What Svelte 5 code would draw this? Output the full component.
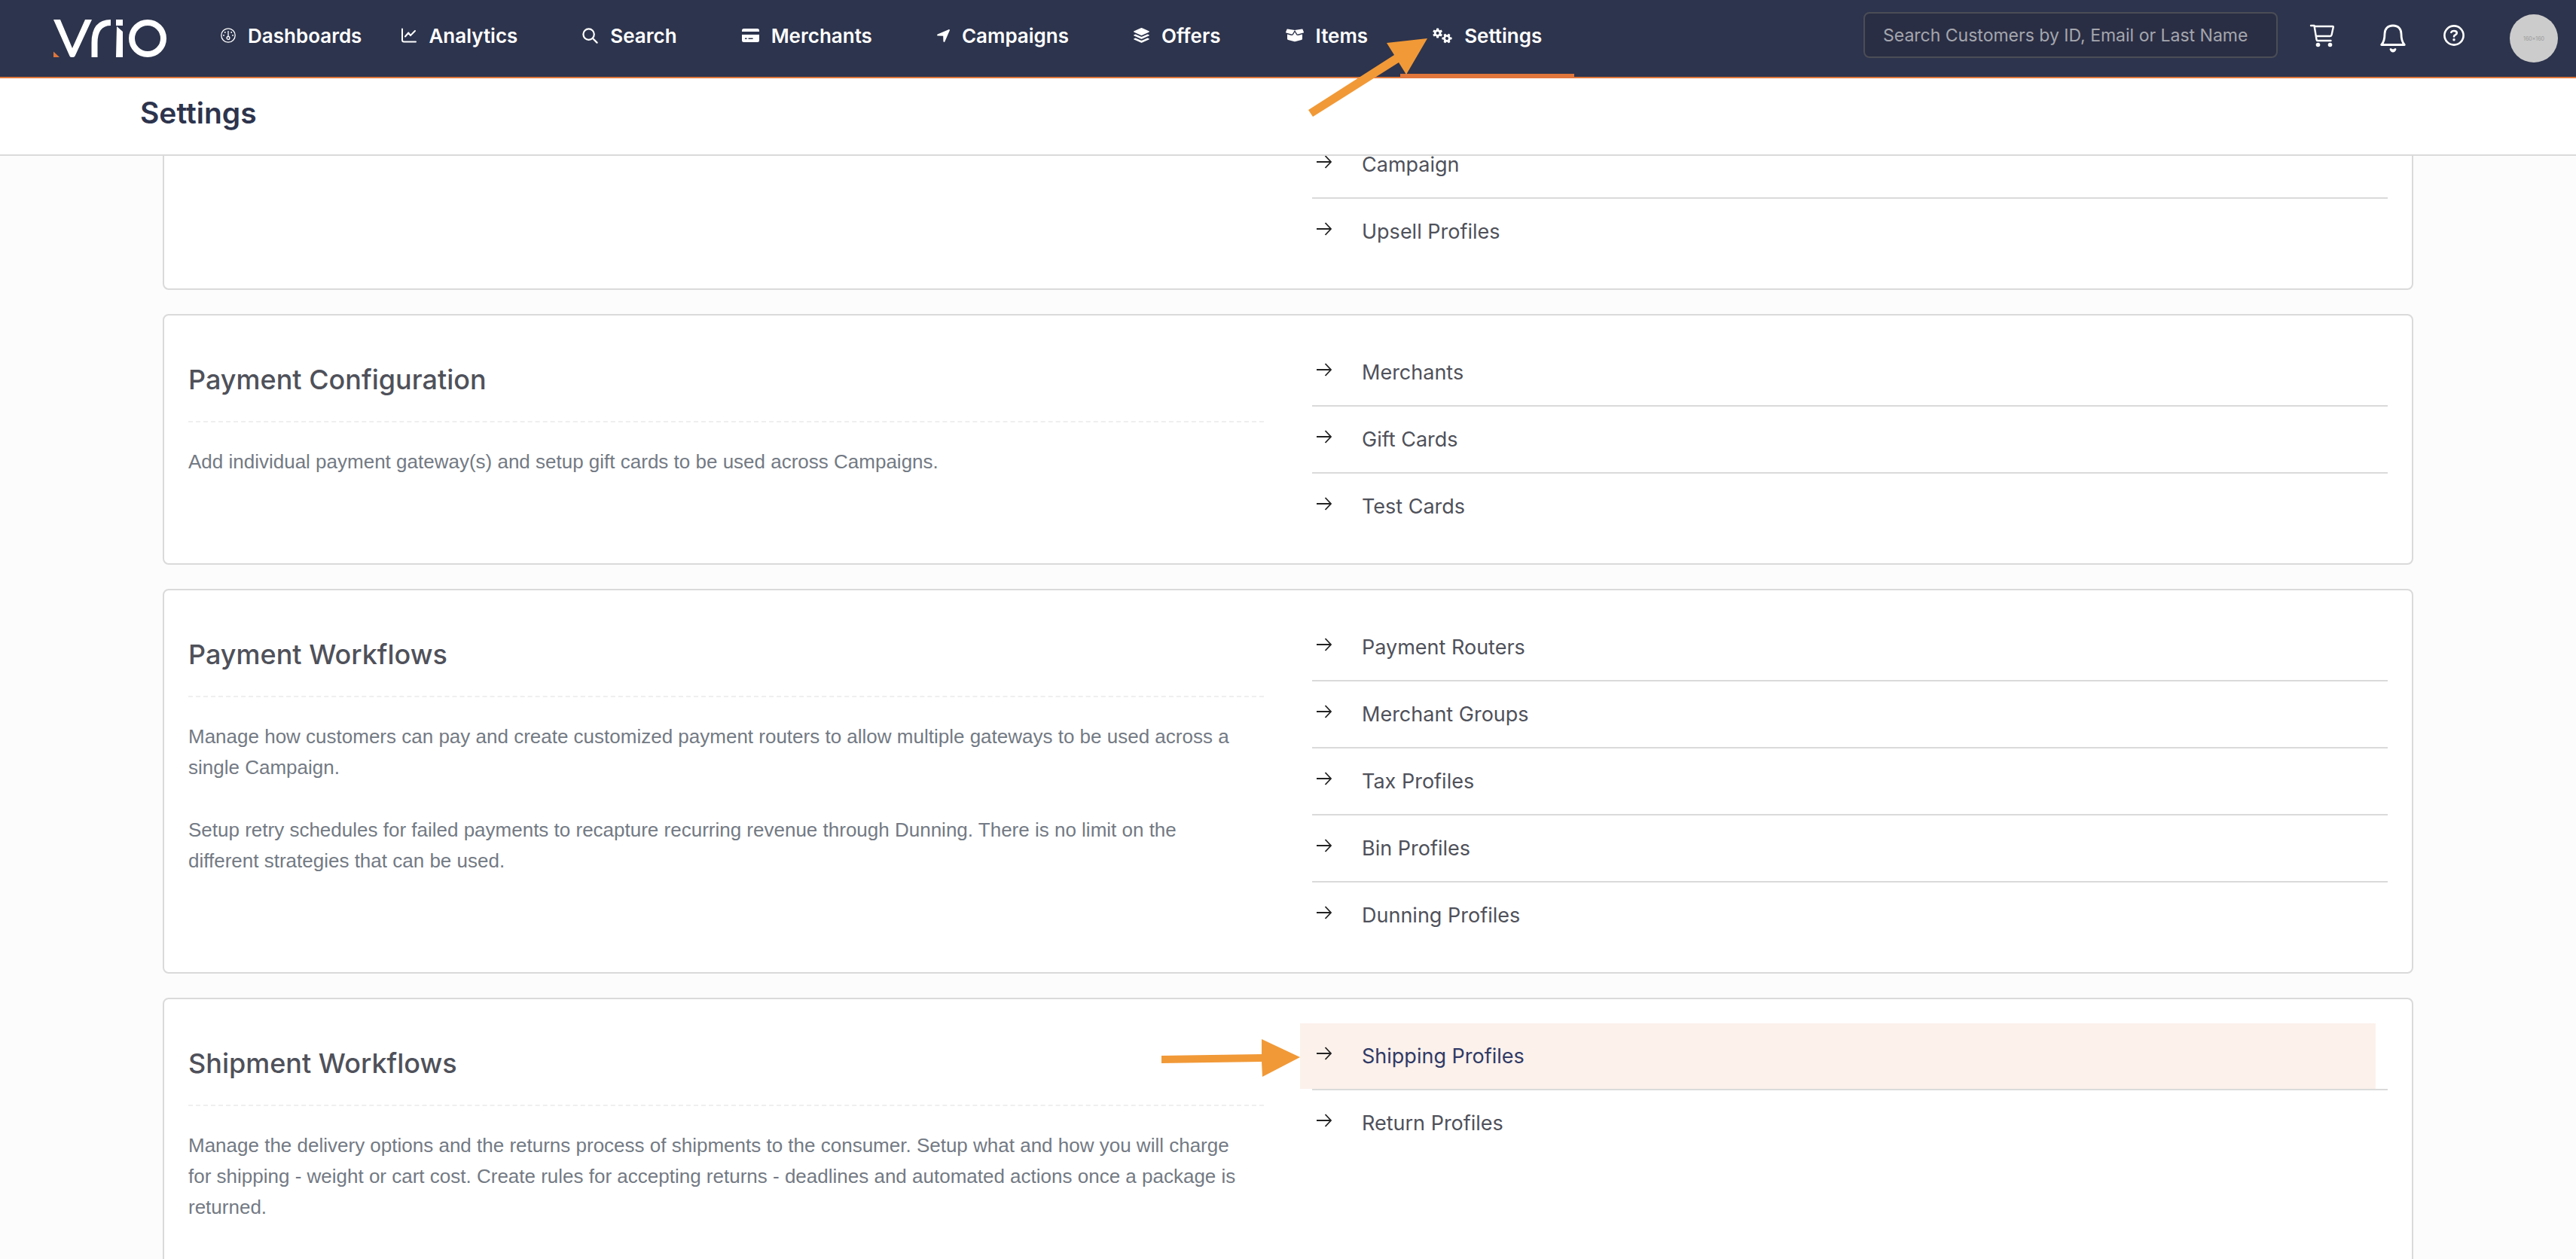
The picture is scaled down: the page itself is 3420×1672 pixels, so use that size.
<script>
  const nav = [
    { label: 'Dashboards', icon: 'gauge' },
    { label: 'Analytics', icon: 'chart' },
    { label: 'Search', icon: 'search' },
    { label: 'Merchants', icon: 'card' },
    { label: 'Campaigns', icon: 'plane' },
    { label: 'Offers', icon: 'layers' },
    { label: 'Items', icon: 'box' },
    { label: 'Settings', icon: 'gears', active: true }
  ];

  const sections = [
    { title: '', text: [], links: ['Campaign', 'Upsell Profiles'] },
    {
      title: 'Payment Configuration',
      text: ['Add individual payment gateway(s) and setup gift cards to be used across Campaigns.'],
      links: ['Merchants', 'Gift Cards', 'Test Cards']
    },
    {
      title: 'Payment Workflows',
      text: [
        'Manage how customers can pay and create customized payment routers to allow multiple gateways to be used across a single Campaign.',
        'Setup retry schedules for failed payments to recapture recurring revenue through Dunning. There is no limit on the different strategies that can be used.'
      ],
      links: ['Payment Routers', 'Merchant Groups', 'Tax Profiles', 'Bin Profiles', 'Dunning Profiles']
    },
    {
      title: 'Shipment Workflows',
      text: [
        'Manage the delivery options and the returns process of shipments to the consumer. Setup what and how you will charge for shipping - weight or cart cost. Create rules for accepting returns - deadlines and automated actions once a package is returned.'
      ],
      links: ['Shipping Profiles', 'Return Profiles'],
      highlight: 'Shipping Profiles'
    }
  ];
</script>

{#snippet gear(cx, cy, turn)}
  <g transform="translate({cx} {cy}) rotate({turn})">
    {#each [0, 60, 120, 180, 240, 300] as a}
      <rect x="-1.6" y="-6.6" width="3.2" height="3.2" rx="0.8" fill="#fff" transform="rotate({a})" />
    {/each}
    <circle r="3.4" fill="none" stroke="#fff" stroke-width="2.7" />
  </g>
{/snippet}

{#snippet navIcon(name)}
  {#if name === 'gauge'}
    <svg width="20" height="20" viewBox="0 0 20 20" fill="none" stroke="#fff" stroke-width="1.3" aria-hidden="true">
      <circle cx="10" cy="10" r="9.2" />
      <path d="M10 4v7.5" />
      <circle cx="10" cy="13.4" r="1.9" />
      <g fill="#fff" stroke="none">
        <circle cx="5.8" cy="6" r="0.9" /><circle cx="14.2" cy="6" r="0.9" />
        <circle cx="4" cy="10" r="0.9" /><circle cx="16" cy="10" r="0.9" />
      </g>
    </svg>
  {:else if name === 'chart'}
    <svg width="20" height="20" viewBox="0 0 20 20" fill="none" stroke="#fff" stroke-width="2" stroke-linecap="round" stroke-linejoin="round" aria-hidden="true">
      <path d="M1 1.5v14.5q0 2.5 2.5 2.5H19" />
      <path d="M5 11.5l4.3-5 2.7 3.6L18 4" />
    </svg>
  {:else if name === 'search'}
    <svg width="21" height="21" viewBox="0 0 21 21" fill="none" stroke="#fff" stroke-width="2.2" stroke-linecap="round" aria-hidden="true">
      <circle cx="8.6" cy="8.6" r="7.2" /><path d="M14 14l5.6 5.6" />
    </svg>
  {:else if name === 'card'}
    <svg width="23" height="18" viewBox="0 0 23 18" aria-hidden="true">
      <path fill="#fff" fill-rule="evenodd" d="M2.5 0h18Q23 0 23 2.500v1.500H0V2.500Q0 0 2.500 0zM0 8h23v7.500q0 2.500-2.500 2.500h-18Q0 18 0 15.500zM4 12.400v1.600h2.600v-1.600zM8.600 12.400v1.600h6v-1.600z" />
    </svg>
  {:else if name === 'plane'}
    <svg width="17" height="17" viewBox="0 0 17 17" aria-hidden="true">
      <path fill="#fff" d="M15.400.2L.8 6.600C-.3 7.100 0 8.500 1.200 8.600L8.200 8.800 8.400 15.800C8.500 17 9.900 17.300 10.400 16.200L16.800 1.600C17.200.7 16.300-.2 15.400.2z" />
    </svg>
  {:else if name === 'layers'}
    <svg width="21" height="20" viewBox="0 0 21 20" fill="#fff" aria-hidden="true">
      <path d="M9.600.3q.9-.4 1.800 0l8.900 4q1.200.7 0 1.400l-8.900 4q-.9.4-1.800 0l-8.900-4q-1.200-.7 0-1.400z" />
      <path d="M.7 9.200L2.500 8.500l6.800 3q1.200.5 2.400 0l6.800-3 1.800.7q1.200.7 0 1.400l-8.900 4q-.9.4-1.800 0l-8.900-4q-1.200-.7 0-1.400z" />
      <path d="M.7 14.200L2.500 13.500l6.800 3q1.200.5 2.400 0l6.800-3 1.800.7q1.200.7 0 1.400l-8.900 4q-.9.4-1.800 0l-8.900-4q-1.200-.7 0-1.400z" />
    </svg>
  {:else if name === 'box'}
    <svg width="24" height="18" viewBox="0 0 24 18" fill="#fff" aria-hidden="true">
      <path d="M2 .6L12 2 9 7q-.5.800-1.300.6L.6 5.600q-.8-.3-.5-1.100L1.500 1Q1.600.5 2 .6zM22 .6L12 2l3 5q.5.800 1.300.6l7.100-2q.8-.3.500-1.100L22.500 1Q22.400.5 22 .6z" />
      <path d="M12 4.500l2 3.400q1 1.500 2.700 1l5.300-1.500v6q0 1.200-1.200 1.600l-7.600 2q-1.200.3-2.400 0l-7.600-2Q2 14.600 2 13.400v-6l5.300 1.500q1.700.5 2.700-1z" />
    </svg>
  {:else}
    <svg width="26" height="22" viewBox="0 0 26 22" aria-hidden="true">
      {@render gear(6.6, 8, 0)}
      {@render gear(19, 15, 30)}
    </svg>
  {/if}
{/snippet}

<div class="page">
  <header class="topbar">
    <a class="logo" href="#home" aria-label="Vrio">
      <svg width="150" height="50" viewBox="0 0 150 50" fill="none" aria-hidden="true">
        <path fill="#fff" d="M0 0h9l16 38L42 0h9L28.500 48.500Q27.500 50 25.500 50H24Q22.300 50 21.500 48.500z" />
        <path stroke="#fff" stroke-width="8" d="M54.500 50V31Q54.500 4 76 4" />
        <path fill="#fff" d="M83 0h9v8h-9zM84 9l8 7v34h-9z" />
        <ellipse cx="125" cy="25" rx="21" ry="21" stroke="#fff" stroke-width="8" />
        <path fill="#e0763b" d="M0 42.500L8 50H0z" />
      </svg>
    </a>

    <nav class="nav" aria-label="Main">
      {#each nav as item}
        <a class="nav-item" class:active={item.active} href="#{item.label.toLowerCase()}">
          {@render navIcon(item.icon)}
          <span>{item.label}</span>
          {#if item.active}
            <svg class="pointer-nav" width="158" height="104" viewBox="0 0 158 104" aria-hidden="true">
              <path fill="#f19937" d="M158 0L104 6l10 16L0 95l6 9 114-72 10 16z" />
            </svg>
          {/if}
        </a>
      {/each}
    </nav>

    <input class="search" type="text" aria-label="Search customers" placeholder="Search Customers by ID, Email or Last Name" />

    <div class="tools">
      <button class="tool" aria-label="Cart">
        <svg width="34" height="32" viewBox="0 0 34 32" fill="none" stroke="#fff" stroke-width="2.400" stroke-linecap="round" stroke-linejoin="round" aria-hidden="true">
          <path d="M2 3h4.500l3 18.500q.2 1.500 1.500 1.500h17.500M7 4h24q1 0 .8 1l-2.300 10.500q-.3 1.500-1.800 1.500H9" />
          <circle cx="11.500" cy="28.500" r="2.800" fill="#fff" stroke="none" /><circle cx="27.500" cy="28.500" r="2.800" fill="#fff" stroke="none" />
        </svg>
      </button>
      <button class="tool" aria-label="Notifications">
        <svg width="34" height="46" viewBox="0 -8 34 46" fill="none" stroke="#fff" stroke-width="2.800" stroke-linejoin="round" aria-hidden="true">
          <path d="M17 2C9.500 2 6 7 6 13c0 8-1.500 11.500-4.300 14.500h30.600C29.500 24.500 28 21 28 13 28 7 24.500 2 17 2z" />
          <path fill="#fff" stroke="none" d="M12.500 33.500q0-1.500 1.500-1.500l3 1.500 3-1.500q1.500 0 1.500 1.500-1.500 4-4.500 4t-4.500-4z" />
        </svg>
      </button>
      <button class="tool" aria-label="Help">
        <svg width="28" height="28" viewBox="0 0 28 28" fill="none" stroke="#fff" stroke-width="2.600" stroke-linecap="round" aria-hidden="true">
          <circle cx="14" cy="14" r="12.600" />
          <path d="M10.300 9.800q1-1.800 3.700-1.800 3.800 0 3.800 2.800 0 1.400-1.700 2.300-2.100 1-2.100 2.400" />
          <circle cx="14" cy="19.800" r="1.700" fill="#fff" stroke="none" />
        </svg>
      </button>
      <button class="avatar" aria-label="Account">160×160</button>
    </div>
  </header>

  <div class="title-bar"><h1>Settings</h1></div>

  <main class="content">
    {#each sections as s}
      <section class="panel">
        <div class="about">
          {#if s.title}
            <h2>{s.title}</h2>
            {#each s.text as p}<p>{p}</p>{/each}
          {/if}
        </div>
        <ul class="links">
          {#each s.links as link}
            <li>
              <a class="link" class:hovered={s.highlight === link} href="#{link.toLowerCase().replaceAll(' ', '-')}">
                <svg class="arrow" width="20" height="18" viewBox="0 0 20 18" fill="none" stroke="#222" stroke-width="1.800" aria-hidden="true">
                  <path d="M0 9h19M11.500 1l7.500 8-7.500 8" />
                </svg>
                <span>{link}</span>
              </a>
              {#if s.highlight === link}
                <svg class="pointer-row" width="184" height="50" viewBox="0 0 184 50" aria-hidden="true">
                  <path fill="#f19937" d="M184 24L133 0v20L0 22v10l133-2 1 20z" />
                </svg>
              {/if}
            </li>
          {/each}
        </ul>
      </section>
    {/each}
  </main>
</div>

<style>
  :global(body) { background: #fcfcfc; }
  .page {
    display: flex;
    flex-direction: column;
    height: 100vh;
    overflow: hidden;
    font-family: Inter, "Liberation Sans", sans-serif;
    color: #4f515a;
  }
  .page * { box-sizing: border-box; }
  a { color: inherit; text-decoration: none; }
  svg { display: block; flex: none; }

  .topbar {
    position: relative;
    z-index: 2;
    display: flex;
    align-items: stretch;
    flex: none;
    height: 104px;
    padding: 0 24px 0 71px;
    background: #2d344d;
    border-bottom: 2px solid #e0763b;
  }
  .logo { display: flex; align-items: center; margin-right: 29px; }
  .nav { display: flex; }
  .nav-item {
    position: relative;
    display: flex;
    align-items: center;
    gap: 16px;
    padding: 0 43px 8px;
    color: #fff;
    font-size: 26px;
    font-weight: 600;
  }
  .nav-item:first-child { padding-right: 10px; }
  .nav-item.active::after {
    content: "";
    position: absolute;
    left: 0;
    right: 0;
    bottom: 0;
    height: 4px;
    background: #e0763b;
  }
  .pointer-nav { position: absolute; top: 51px; right: calc(100% - 36px); z-index: 3; }

  .search {
    align-self: flex-start;
    width: 550px;
    height: 61px;
    margin: 16px 0 0 auto;
    padding: 0 24px;
    border: 2px solid #4b4d56;
    border-radius: 8px;
    background: #2a2e44;
    color: #fff;
    font-family: inherit;
    font-size: 23px;
  }
  .search::placeholder { color: #a4a6ae; opacity: 1; }

  .tools { display: flex; align-items: center; padding-left: 42px; }
  .tool { padding: 0 0 8px; border: 0; background: none; margin-right: 60px; }
  .tool + .tool { margin-right: 50px; }
  .tool + .tool + .tool { margin-right: 60px; }
  .avatar {
    width: 64px;
    height: 64px;
    padding: 0;
    border: 0;
    border-radius: 50%;
    background: #ccc;
    color: #999;
    font-family: inherit;
    font-size: 7px;
  }

  .title-bar {
    position: relative;
    z-index: 1;
    flex: none;
    height: 103px;
    padding: 22px 186px 0;
    background: #fff;
    border-bottom: 2px solid #dadada;
  }
  h1 { margin: 0; font-size: 39px; line-height: 48px; font-weight: 600; color: #2d344d; }

  .content {
    flex: 1;
    min-height: 0;
    overflow: hidden;
    padding: 0 216px;
  }
  .panel {
    display: grid;
    grid-template-columns: 1fr 1fr;
    gap: 64px;
    margin-bottom: 32px;
    padding: 32px;
    background: #fff;
    border: 2px solid #dadada;
    border-radius: 8px;
  }
  .panel:first-child { margin-top: -66px; }
  h2 {
    margin: 0 0 32px;
    padding: 30px 0 32px;
    border-bottom: 2px dashed #efefef;
    font-size: 36px;
    line-height: 46px;
    font-weight: 500;
  }
  p {
    margin: 0 0 42px;
    padding-right: 28px;
    font-family: "Liberation Sans", Arial, sans-serif;
    font-size: 26px;
    line-height: 41px;
    color: #737a84;
  }
  .links { margin: 0; padding: 0; list-style: none; }
  li { position: relative; }
  li + li { border-top: 2px solid #dadada; }
  .link {
    display: flex;
    align-items: center;
    gap: 40px;
    height: 87px;
    padding: 0 6px;
    font-size: 27px;
    line-height: 27px;
  }
  .arrow { margin-bottom: 8px; }
  .link.hovered {
    margin: 0 16px 0 -16px;
    padding-left: 22px;
    background: #fcf1eb;
    color: #303a66;
  }
  .pointer-row { position: absolute; top: 21px; right: calc(100% + 16px); }
</style>
